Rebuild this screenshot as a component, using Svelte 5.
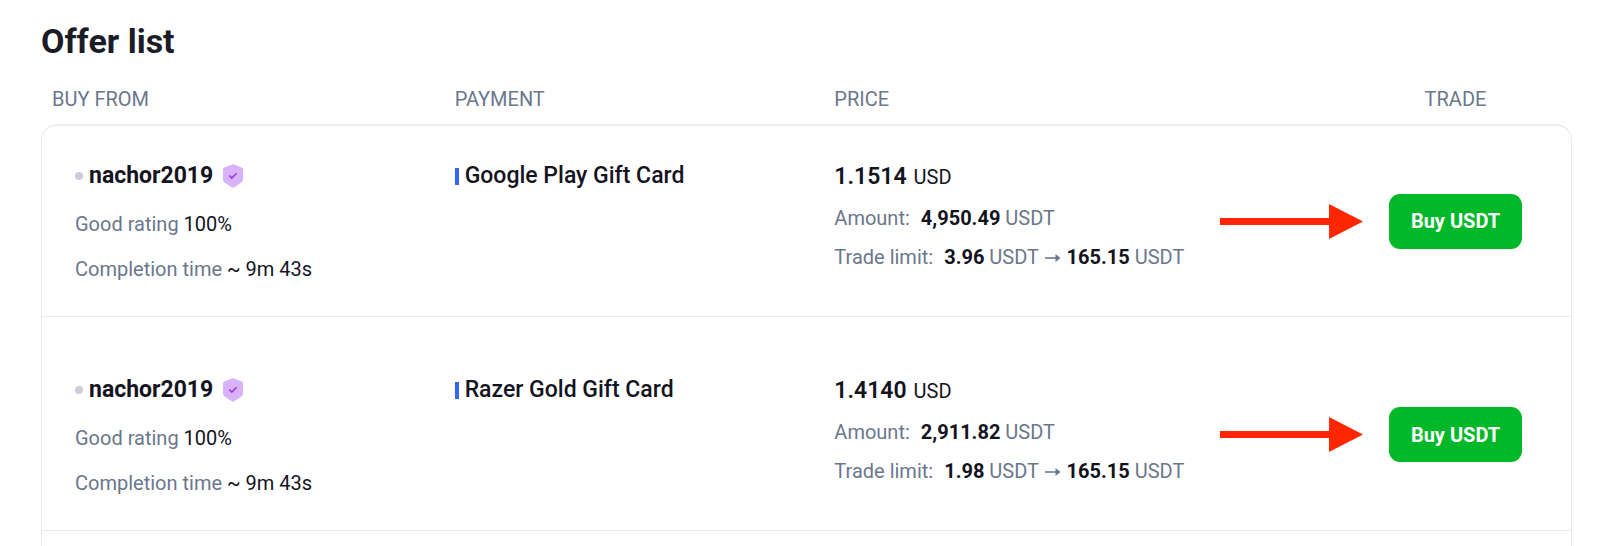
<script>
  const offers = [
    {
      seller: 'nachor2019', rating: '100%', time: '~ 9m 43s', method: 'Google Play Gift Card',
      price: '1.1514', amount: '4,950.49', min: '3.96', max: '165.15'
    },
    {
      seller: 'nachor2019', rating: '100%', time: '~ 9m 43s', method: 'Razer Gold Gift Card',
      price: '1.4140', amount: '2,911.82', min: '1.98', max: '165.15'
    }
  ];
</script>

<main>
  <h1>Offer list</h1>
  <table>
    <thead>
      <tr>
        <th class="from" scope="col">BUY FROM</th>
        <th class="payment" scope="col">PAYMENT</th>
        <th class="cost" scope="col">PRICE</th>
        <th class="trade" scope="col"><span>TRADE</span></th>
      </tr>
    </thead>
    <tbody>
      {#each offers as offer}
        <tr>
          <td class="from">
            <div class="seller">
              <i class="dot"></i>
              <strong>{offer.seller}</strong>
              <svg class="shield" viewBox="0 0 20 24" width="20" height="24" aria-hidden="true">
                <path d="M8.8 .6Q10 0 11.2 .6L18.6 3.5Q20 4 20 5.500V15.500Q20 17.200 18.700 18.200L11.300 23.300Q10 24.100 8.700 23.300L1.300 18.200Q0 17.200 0 15.500V5.500Q0 4 1.400 3.500Z" fill="#d9b3f9" />
                <path d="M6.300 11.500L8.800 14L13.600 9.200" fill="none" stroke="#9b35e8" stroke-width="1.600" />
              </svg>
            </div>
            <p>Good rating <b>{offer.rating}</b></p>
            <p>Completion time <b>{offer.time}</b></p>
          </td>
          <td class="payment">
            <div class="method"><i class="bar"></i>{offer.method}</div>
          </td>
          <td class="cost">
            <div class="price"><strong>{offer.price}</strong> <span>USD</span></div>
            <div class="detail">
              <span class="label">Amount:</span><strong>{offer.amount}</strong> USDT
            </div>
            <div class="detail">
              <span class="label">Trade limit:</span><strong>{offer.min}</strong> USDT
              <svg class="to" viewBox="0 0 16 12" width="16" height="12" aria-hidden="true">
                <path d="M0 6H13" stroke="currentColor" stroke-width="1.600" />
                <path d="M10.500 2L15.500 6L10.500 10Z" fill="currentColor" />
              </svg>
              <strong>{offer.max}</strong> USDT
            </div>
          </td>
          <td class="trade">
            <div class="action">
              <svg viewBox="0 0 143 35" width="143" height="35" aria-hidden="true">
                <path d="M0 14H109V0L143 17.500L109 35V21H0Z" fill="#ff2600" />
              </svg>
              <button type="button">Buy USDT</button>
            </div>
          </td>
        </tr>
      {/each}
      <tr class="next"><td class="from"></td><td></td><td></td><td class="trade"></td></tr>
    </tbody>
  </table>
</main>

<style>
  :global(body) {
    margin: 0;
    background: #fff;
  }
  main {
    padding: 19px 28px 0 41px;
    color: #14141f;
    font-family: Roboto, sans-serif;
    font-size: 20px;
    line-height: 30px;
  }
  h1 {
    margin: 0;
    font-size: 34px;
    line-height: 44px;
    font-weight: 700;
    color: #1c1c28;
  }
  table {
    width: 100%;
    margin-top: 21px;
    table-layout: fixed;
    border-collapse: separate;
    border-spacing: 0;
  }
  th {
    padding: 0 11px 10px;
    text-align: left;
    font-weight: 400;
    color: #6b778c;
  }
  th.from { width: 26.3%; }
  th.payment { width: 24.8%; }
  th.cost { width: 25.2%; }
  th, td { box-sizing: border-box; }
  th.trade {
    padding-right: 50px;
    text-align: right;
  }
  th.trade span {
    display: inline-block;
    width: 133px;
    text-align: center;
  }
  td {
    padding: 58px 11px 32px;
    border-top: 1px solid #e8eaed;
    vertical-align: top;
  }
  td.from {
    padding-left: 33px;
    border-left: 1px solid #e8eaed;
  }
  td.trade {
    padding: 22px 49px 0 0;
    border-right: 1px solid #e8eaed;
    vertical-align: middle;
  }
  tbody tr:first-child td {
    padding-top: 35px;
    border-top: 2px solid #ededee;
  }
  tbody tr:first-child td.from { border-top-left-radius: 16px; }
  tbody tr:first-child td.trade {
    padding: 0 49px 0 0;
    border-top-right-radius: 16px;
  }
  tbody .next td {
    height: 20px;
    padding: 0;
  }
  .seller {
    display: flex;
    align-items: center;
    height: 30px;
    font-size: 23px;
  }
  .seller strong { margin: 0 10px 0 6px; }
  strong { font-weight: 700; }
  .dot {
    width: 8px;
    height: 8px;
    border-radius: 50%;
    background: #caced8;
  }
  p {
    margin: 18px 0 0;
    color: #6b778c;
  }
  p + p { margin-top: 15px; }
  b {
    font-weight: 400;
    color: #14141f;
  }
  .method {
    display: flex;
    align-items: center;
    gap: 6px;
    font-size: 23px;
    font-weight: 500;
  }
  .bar {
    width: 4px;
    height: 17px;
    background: #3366ff;
  }
  .price {
    margin: 1px 0 11px;
  }
  .price strong {
    margin-right: 2px;
    font-size: 23px;
    font-weight: 600;
  }
  .detail {
    margin-bottom: 9px;
    color: #6b778c;
    white-space: nowrap;
  }
  .detail:last-child { margin-bottom: 0; }
  .detail strong { color: #14141f; }
  .label { margin-right: 11px; }
  .to { margin: 0 1px; }
  .action {
    display: flex;
    align-items: center;
    justify-content: flex-end;
    gap: 26px;
  }
  button {
    width: 133px;
    height: 55px;
    padding: 0;
    border: 0;
    border-radius: 11px;
    background: #00b828;
    color: #fff;
    font: 700 20px/30px Roboto, sans-serif;
  }
</style>
